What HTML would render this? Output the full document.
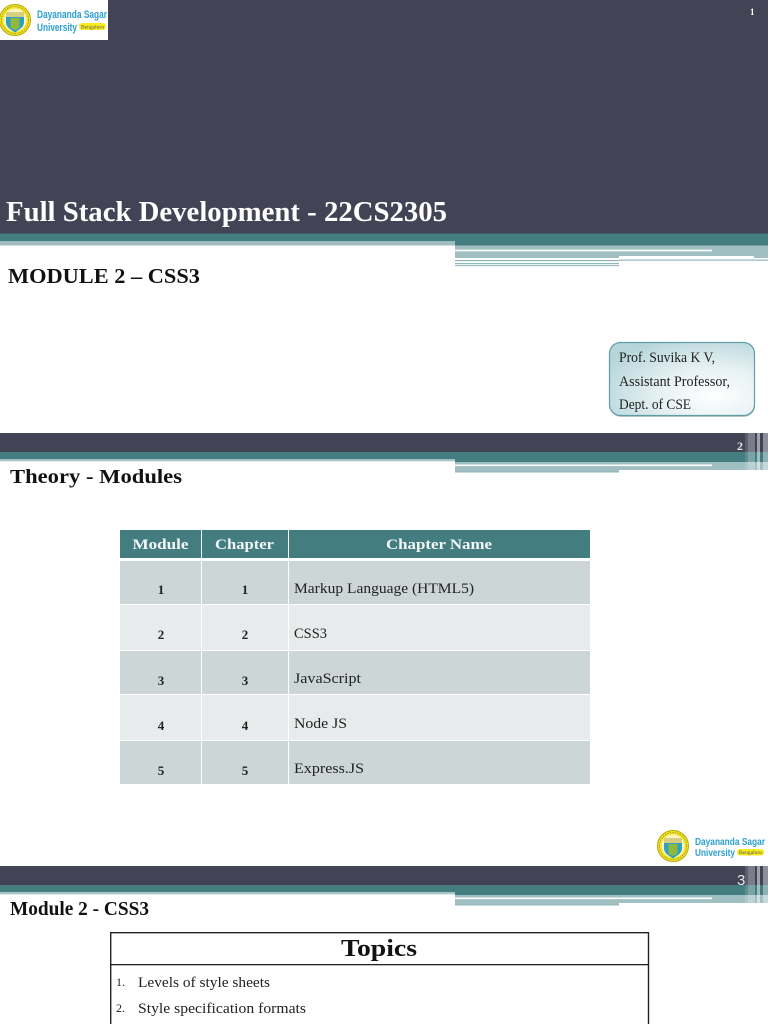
<!DOCTYPE html>
<html><head><meta charset="utf-8"><style>
html,body{margin:0;padding:0;background:#fff;width:768px;height:1024px;overflow:hidden}
svg{display:block}
text{font-family:"Liberation Serif",serif}
.b{font-weight:bold}
.lg{font-family:"Liberation Sans",sans-serif;font-weight:bold;fill:#2a9fd0}
</style></head><body>
<svg width="768" height="1024" viewBox="0 0 768 1024" xmlns="http://www.w3.org/2000/svg">
<defs>
<radialGradient id="g" cx="0.72" cy="0.72" r="0.85"><stop offset="0" stop-color="#fff"/><stop offset="0.45" stop-color="#e6f1f3"/><stop offset="1" stop-color="#b5d5da"/></radialGradient>
<g id="logo">
<circle cx="0" cy="0" r="15.5" fill="#f5e62a" stroke="#b8a800" stroke-width="1"/>
<circle cx="0" cy="0" r="11.5" fill="#fbf7c0"/>
<circle cx="0" cy="0" r="13.5" fill="none" stroke="#8f8a20" stroke-width="0.8" stroke-dasharray="1.5 1"/>
<path d="M-9-8H9V2C9 8 3 10 0 12.500C-3 10-9 8-9 2Z" fill="#2f9fc4"/>
<rect x="-9" y="-8" width="18" height="5" fill="#d8cd80"/>
<path d="M-4.500 8V-2H4.500V8L0 10Z" fill="#8fb83c"/>
</g>
<g id="bars">
<rect x="745" y="0" width="3" height="39" fill="#fff" fill-opacity=".14"/>
<rect x="748" y="0" width="7" height="39" fill="#fff" fill-opacity=".3"/>
<rect x="757" y="0" width="3" height="39" fill="#fff" fill-opacity=".5"/>
<rect x="763" y="0" width="5" height="39" fill="#fff" fill-opacity=".4"/>
</g>
</defs>

<!-- slide 1 -->
<rect x="0" y="0" width="768" height="233.500" fill="#424456"/>
<rect x="0" y="233.500" width="768" height="12" fill="#437d80"/>
<rect x="0" y="241" width="455" height="4.500" fill="#9fbcc0"/>
<rect x="455" y="245.500" width="313" height="12.500" fill="#a0bfc3"/>
<rect x="455" y="249.700" width="257" height="1.600" fill="#fff"/>
<rect x="619" y="256" width="135" height="3" fill="#fff"/>
<rect x="754" y="258" width="14" height="1.500" fill="#fff"/>
<rect x="455" y="260" width="164" height="1.200" fill="#8fb5b9"/>
<rect x="619" y="259.500" width="149" height="1.200" fill="#8fb5b9"/>
<rect x="455" y="263" width="164" height="1.200" fill="#8fb5b9"/>
<rect x="455" y="265" width="164" height="1.200" fill="#a0c0c4"/>
<rect x="0" y="0" width="108" height="40" fill="#fff"/>
<use href="#logo" x="15" y="20"/>
<text class="lg" x="37" y="18" font-size="11" textLength="70" lengthAdjust="spacingAndGlyphs">Dayananda Sagar</text>
<text class="lg" x="37" y="31" font-size="11" textLength="40" lengthAdjust="spacingAndGlyphs">University</text>
<rect x="79" y="23" width="27" height="7" rx="3.500" fill="#f7ea1e"/>
<text x="81" y="28.500" font-size="5" fill="#555" textLength="23" lengthAdjust="spacingAndGlyphs">Bengaluru</text>
<text class="b" x="750" y="15" font-size="9" fill="#fff">1</text>
<text class="b" x="6" y="221" font-size="29" fill="#fff" textLength="441" lengthAdjust="spacingAndGlyphs">Full Stack Development - 22CS2305</text>
<text class="b" x="8" y="283" font-size="21.500" fill="#111" textLength="192" lengthAdjust="spacingAndGlyphs">MODULE 2 – CSS3</text>
<rect x="610" y="344" width="145" height="73" rx="11" fill="#8fa9ad" fill-opacity=".6"/>
<rect x="609.500" y="342.500" width="145" height="73" rx="11" fill="url(#g)" stroke="#5f9ea5" stroke-width="1.200"/>
<text x="619" y="362" font-size="15" fill="#222" textLength="96" lengthAdjust="spacingAndGlyphs">Prof. Suvika K V,</text>
<text x="619" y="386" font-size="15" fill="#222" textLength="111" lengthAdjust="spacingAndGlyphs">Assistant Professor,</text>
<text x="619" y="409" font-size="15" fill="#222" textLength="72" lengthAdjust="spacingAndGlyphs">Dept. of CSE</text>

<!-- slide 2 -->
<rect x="0" y="433" width="768" height="19" fill="#424456"/>
<rect x="0" y="452" width="768" height="7" fill="#437d80"/>
<rect x="0" y="459" width="455" height="2.300" fill="#a6c3c6"/>
<rect x="455" y="459" width="313" height="3" fill="#437d80"/>
<rect x="455" y="462" width="313" height="10" fill="#a0bfc3"/>
<rect x="455" y="464.500" width="257" height="1.600" fill="#fff"/>
<rect x="619" y="470" width="149" height="2" fill="#fff"/>
<rect x="455" y="471.500" width="164" height="1" fill="#8fb5b9"/>
<use href="#bars" x="0" y="433"/>
<text class="b" x="737" y="450" font-size="12" fill="#e8e8e8">2</text>
<text class="b" x="10" y="483" font-size="20.500" fill="#111" textLength="172" lengthAdjust="spacingAndGlyphs">Theory - Modules</text>

<rect x="120" y="530" width="81" height="28" fill="#437d80"/>
<rect x="202" y="530" width="86" height="28" fill="#437d80"/>
<rect x="289" y="530" width="301" height="28" fill="#437d80"/>
<g fill="#cdd6d7"><rect x="120" y="561" width="81" height="43"/><rect x="202" y="561" width="86" height="43"/><rect x="289" y="561" width="301" height="43"/>
<rect x="120" y="651" width="81" height="43"/><rect x="202" y="651" width="86" height="43"/><rect x="289" y="651" width="301" height="43"/>
<rect x="120" y="741" width="81" height="43"/><rect x="202" y="741" width="86" height="43"/><rect x="289" y="741" width="301" height="43"/></g>
<g fill="#e7ebeb"><rect x="120" y="605" width="81" height="45"/><rect x="202" y="605" width="86" height="45"/><rect x="289" y="605" width="301" height="45"/>
<rect x="120" y="695" width="81" height="45"/><rect x="202" y="695" width="86" height="45"/><rect x="289" y="695" width="301" height="45"/></g>
<g class="b" fill="#f4f7f7" font-size="15" text-anchor="middle">
<text class="b" x="160.500" y="549" textLength="56" lengthAdjust="spacingAndGlyphs">Module</text>
<text class="b" x="244.500" y="549" textLength="59" lengthAdjust="spacingAndGlyphs">Chapter</text>
<text class="b" x="439" y="549" textLength="106" lengthAdjust="spacingAndGlyphs">Chapter Name</text>
</g>
<g fill="#222" font-size="13" text-anchor="middle" font-weight="bold">
<text x="161" y="594">1</text><text x="245" y="594">1</text>
<text x="161" y="639">2</text><text x="245" y="639">2</text>
<text x="161" y="685">3</text><text x="245" y="685">3</text>
<text x="161" y="730">4</text><text x="245" y="730">4</text>
<text x="161" y="775">5</text><text x="245" y="775">5</text>
</g>
<g fill="#222" font-size="15">
<text x="294" y="593" textLength="180" lengthAdjust="spacingAndGlyphs">Markup Language (HTML5)</text>
<text x="294" y="638" textLength="33" lengthAdjust="spacingAndGlyphs">CSS3</text>
<text x="294" y="683" textLength="67" lengthAdjust="spacingAndGlyphs">JavaScript</text>
<text x="294" y="728" textLength="53" lengthAdjust="spacingAndGlyphs">Node JS</text>
<text x="294" y="773" textLength="70" lengthAdjust="spacingAndGlyphs">Express.JS</text>
</g>
<use href="#logo" x="673" y="846"/>
<text class="lg" x="695" y="845" font-size="10.500" textLength="70" lengthAdjust="spacingAndGlyphs">Dayananda Sagar</text>
<text class="lg" x="695" y="856" font-size="10.500" textLength="40" lengthAdjust="spacingAndGlyphs">University</text>
<rect x="737" y="849" width="27" height="6.500" rx="3" fill="#f7ea1e"/>
<text x="739" y="854" font-size="5" fill="#555" textLength="23" lengthAdjust="spacingAndGlyphs">Bengaluru</text>

<!-- slide 3 -->
<rect x="0" y="866" width="768" height="19" fill="#424456"/>
<rect x="0" y="885" width="768" height="7" fill="#437d80"/>
<rect x="0" y="892" width="455" height="2.300" fill="#a6c3c6"/>
<rect x="455" y="892" width="313" height="3" fill="#437d80"/>
<rect x="455" y="895" width="313" height="10" fill="#a0bfc3"/>
<rect x="455" y="897.500" width="257" height="1.600" fill="#fff"/>
<rect x="619" y="903" width="149" height="2" fill="#fff"/>
<rect x="455" y="904.500" width="164" height="1" fill="#8fb5b9"/>
<use href="#bars" x="0" y="866"/>
<text x="737" y="885" font-size="15" fill="#e8e8e8" style="font-family:'Liberation Sans',sans-serif">3</text>
<text class="b" x="10" y="915" font-size="19.500" fill="#111" textLength="139" lengthAdjust="spacingAndGlyphs">Module 2 - CSS3</text>

<path d="M110.700 1024V932.700H648.500V1024" fill="none" stroke="#222" stroke-width="1.400"/>
<rect x="110" y="964" width="539" height="1.300" fill="#222"/>
<text class="b" x="379" y="956" font-size="24" fill="#111" text-anchor="middle" textLength="76" lengthAdjust="spacingAndGlyphs">Topics</text>
<g fill="#222" font-size="15">
<text x="116" y="986" font-size="12">1.</text><text x="138" y="987" textLength="132" lengthAdjust="spacingAndGlyphs">Levels of style sheets</text>
<text x="116" y="1012" font-size="12">2.</text><text x="138" y="1013" textLength="168" lengthAdjust="spacingAndGlyphs">Style specification formats</text>
</g>
</svg>
</body></html>
